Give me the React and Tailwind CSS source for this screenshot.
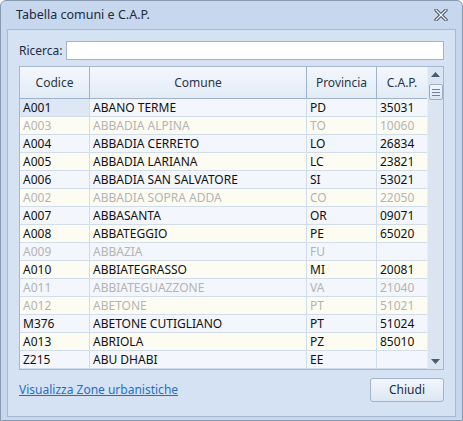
const ROWS = [
  ['A001', 'ABANO TERME', 'PD', '35031', false],
  ['A003', 'ABBADIA ALPINA', 'TO', '10060', true],
  ['A004', 'ABBADIA CERRETO', 'LO', '26834', false],
  ['A005', 'ABBADIA LARIANA', 'LC', '23821', false],
  ['A006', 'ABBADIA SAN SALVATORE', 'SI', '53021', false],
  ['A002', 'ABBADIA SOPRA ADDA', 'CO', '22050', true],
  ['A007', 'ABBASANTA', 'OR', '09071', false],
  ['A008', 'ABBATEGGIO', 'PE', '65020', false],
  ['A009', 'ABBAZIA', 'FU', '', true],
  ['A010', 'ABBIATEGRASSO', 'MI', '20081', false],
  ['A011', 'ABBIATEGUAZZONE', 'VA', '21040', true],
  ['A012', 'ABETONE', 'PT', '51021', true],
  ['M376', 'ABETONE CUTIGLIANO', 'PT', '51024', false],
  ['A013', 'ABRIOLA', 'PZ', '85010', false],
  ['Z215', 'ABU DHABI', 'EE', '', false],
]

function CloseIcon() {
  return (
    <svg width="14" height="12" viewBox="0 0 14 12">
      <path d="M2 1 L12 11 M12 1 L2 11" stroke="#3d4a5c" strokeWidth="3.2" strokeLinecap="round" />
      <path d="M2 1 L12 11 M12 1 L2 11" stroke="#f4f7fb" strokeWidth="1.4" strokeLinecap="round" />
    </svg>
  )
}

function Scrollbar() {
  return (
    <div className="w-[17px] bg-[#dbe5f2] border-l border-[#e8eef7] flex flex-col items-center">
      <svg width="11" height="7" viewBox="0 0 11 7" className="mt-[4px]">
        <path d="M1 6 L5.5 1 L10 6 Z" fill="#4a5a73" />
      </svg>
      <div className="mt-[6px] w-[14px] h-[16px] rounded-[2px] border border-[#9aaec9] bg-gradient-to-b from-[#f2f6fc] to-[#dce6f3] flex flex-col items-center justify-center gap-[2px]">
        <div className="w-[8px] h-px bg-[#6f82a0]" />
        <div className="w-[8px] h-px bg-[#6f82a0]" />
        <div className="w-[8px] h-px bg-[#6f82a0]" />
      </div>
      <div className="flex-1" />
      <svg width="11" height="7" viewBox="0 0 11 7" className="mb-[4px]">
        <path d="M1 1 L5.5 6 L10 1 Z" fill="#4a5a73" />
      </svg>
    </div>
  )
}

export default function App() {
  return (
    <div
      className="w-[463px] h-[421px] bg-[#c6d7ee] border border-[#8898ae] rounded-t-[6px] flex flex-col text-[12px] text-[#1b1b1b]"
      style={{ fontFamily: '"Noto Sans", "Open Sans", sans-serif' }}
    >
      <div className="h-[28px] flex items-center justify-between pl-[15px] pr-[14px]">
        <span className="text-[12.5px] text-[#1e2a3c]">Tabella comuni e C.A.P.</span>
        <CloseIcon />
      </div>

      <div className="mx-[6px] mb-[3px] flex-1 bg-[#d5e2f3] border border-[#a8bad3] flex flex-col px-[11px] pt-[11px]">
        <div className="flex items-center gap-[3px] h-[19px]">
          <span className="text-[#1e2a3c]">Ricerca:</span>
          <div className="flex-1 h-[19px] bg-white border border-[#a3b5ce]" />
        </div>

        <div className="mt-[6px] h-[304px] w-[425px] border border-[#a6b8d1] bg-white flex">
          <div className="flex flex-col w-[407px]">
            <div className="h-[33px] flex bg-gradient-to-b from-[#f4f8fd] to-[#e2ebf6] border-b border-[#9eb2cd] text-[#2a3546]">
              <div className="w-[70px] border-r border-[#9eb2cd] flex items-center justify-center">Codice</div>
              <div className="w-[217px] border-r border-[#9eb2cd] flex items-center justify-center">Comune</div>
              <div className="w-[70px] border-r border-[#9eb2cd] flex items-center justify-center">Provincia</div>
              <div className="w-[50px] flex items-center justify-center">C.A.P.</div>
            </div>
            {ROWS.map(([cod, com, prov, cap, off], i) => (
              <div
                key={cod}
                className={
                  'h-[18px] flex border-b border-[#d2ddec] ' +
                  (i % 2 === 0 ? 'bg-[#f3f7fd] ' : 'bg-[#fdfcf3] ') +
                  (off ? 'text-[#b4b4b4]' : 'text-[#111111]')
                }
              >
                <div className={'w-[70px] border-r border-[#d2ddec] pl-[3px] leading-[18px] ' + (i === 0 ? 'bg-[#dee8f5]' : '')}>{cod}</div>
                <div className="w-[217px] border-r border-[#d2ddec] pl-[3px] leading-[18px]">{com}</div>
                <div className="w-[70px] border-r border-[#d2ddec] pl-[3px] leading-[18px]">{prov}</div>
                <div className="w-[50px] pl-[3px] leading-[18px]">{cap}</div>
              </div>
            ))}
          </div>
          <Scrollbar />
        </div>

        <div className="mt-[8px] flex items-center justify-between">
          <a href="#" className="text-[#1f6fc6] underline">Visualizza Zone urbanistiche</a>
          <button className="w-[74px] h-[24px] rounded-[3px] border border-[#a3b3c9] bg-gradient-to-b from-[#f3f7fc] to-[#dde6f2] text-[#1e2a3c]">
            Chiudi
          </button>
        </div>
      </div>
    </div>
  )
}
